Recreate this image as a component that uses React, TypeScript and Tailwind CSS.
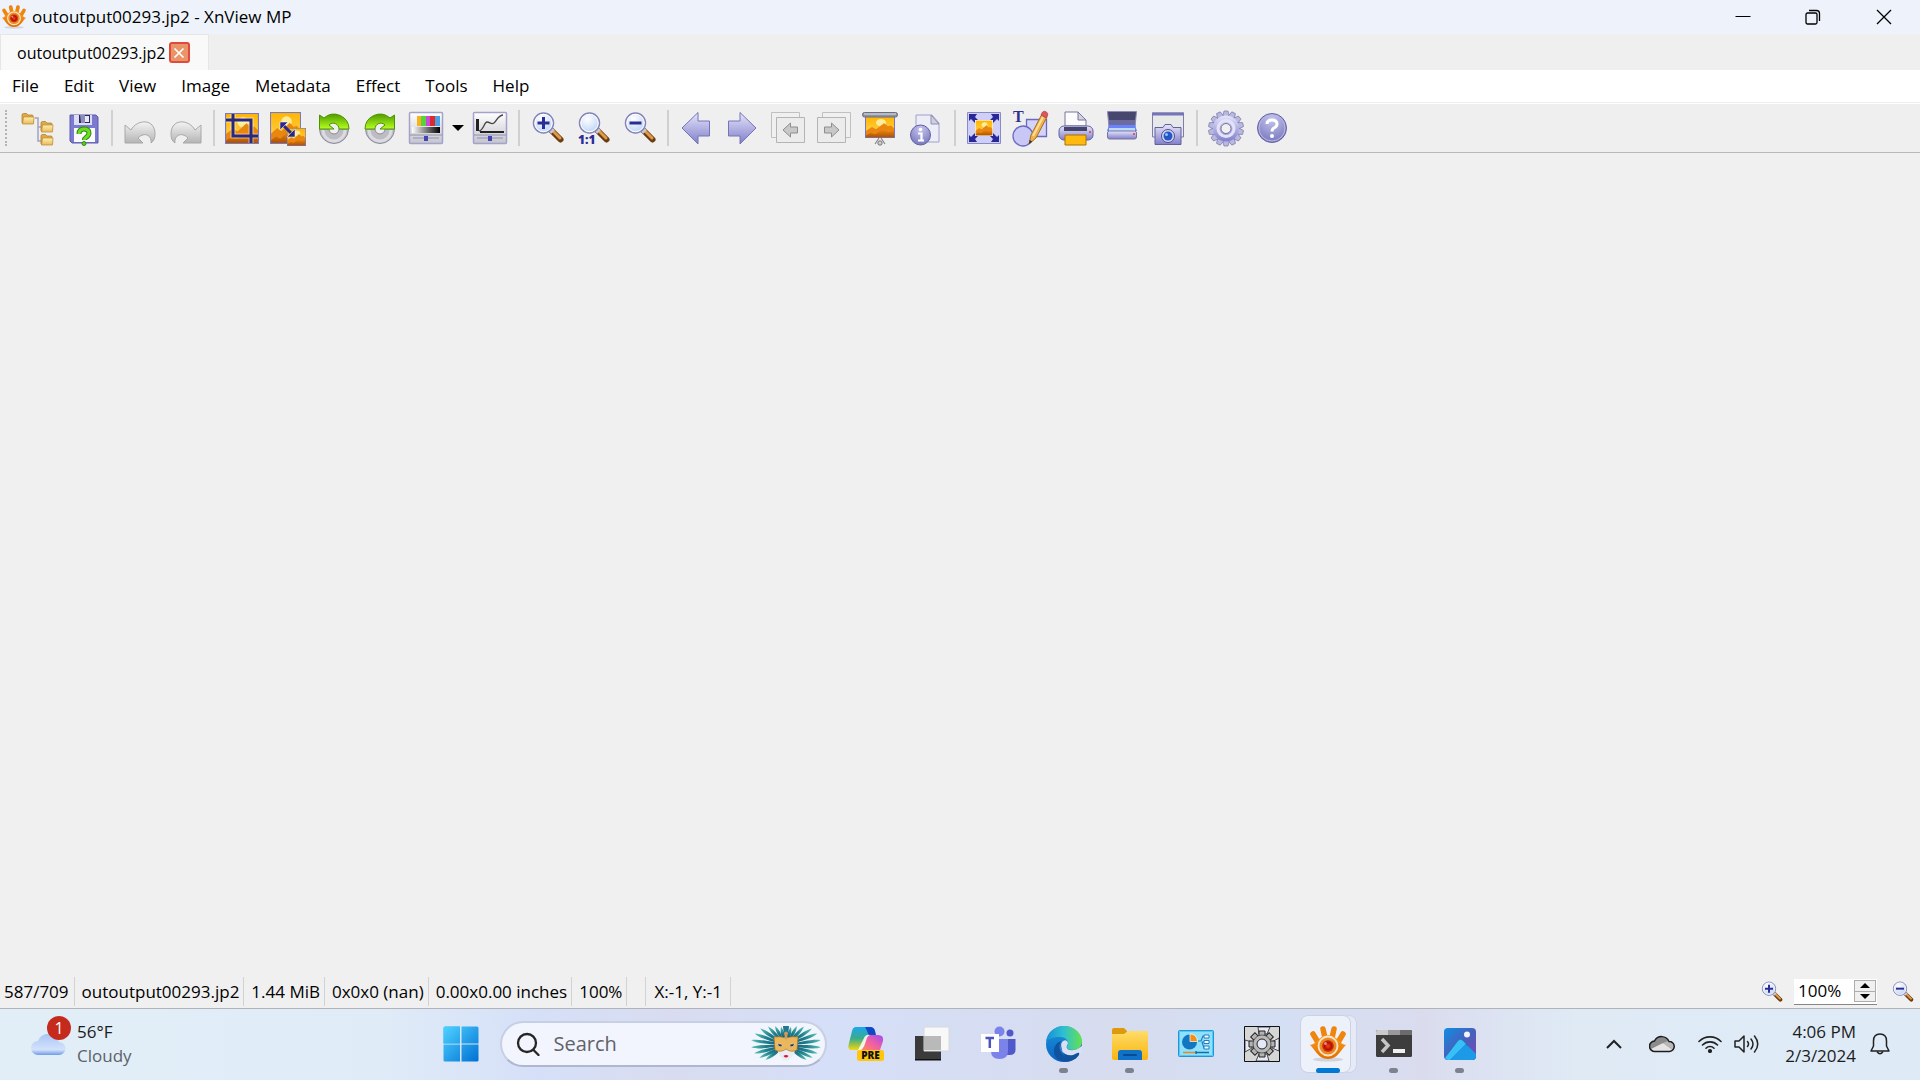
import React from 'react';
import clsx from 'clsx';

const menus = ['File', 'Edit', 'View', 'Image', 'Metadata', 'Effect', 'Tools', 'Help'];

const statusCells = [
  '587/709',
  'outoutput00293.jp2',
  '1.44 MiB',
  '0x0x0 (nan)',
  '0.00x0.00 inches',
  '100%',
];

type IconProps = { children: React.ReactNode; className?: string };

const Icon = ({ children, className = 'w-9 h-9' }: IconProps) => (
  <svg viewBox="0 0 36 36" className={clsx('block shrink-0 overflow-visible', className)} fill="none" aria-hidden="true">
    {children}
  </svg>
);

// Gradients shared by all the icons
const Gradients = () => (
  <svg className="absolute w-0 h-0" aria-hidden="true">
    <defs>
      <linearGradient id="folder" x1="0" y1="0" x2="0" y2="1">
        <stop offset="0" stopColor="#fff0b0" />
        <stop offset="1" stopColor="#e9b95a" />
      </linearGradient>
      <linearGradient id="violet" x1="0" y1="0" x2="0" y2="1">
        <stop offset="0" stopColor="#e6e5fb" />
        <stop offset="1" stopColor="#807fca" />
      </linearGradient>
      <linearGradient id="grey" x1="0" y1="0" x2="0" y2="1">
        <stop offset="0" stopColor="#f4f4f4" />
        <stop offset="1" stopColor="#b4b4b4" />
      </linearGradient>
      <linearGradient id="sky" x1="0" y1="0" x2="0" y2="1">
        <stop offset="0" stopColor="#ffb400" />
        <stop offset="1" stopColor="#ffd85e" />
      </linearGradient>
      <linearGradient id="dune" x1="0" y1="0" x2="0" y2="1">
        <stop offset="0" stopColor="#f08c10" />
        <stop offset="1" stopColor="#a84c00" />
      </linearGradient>
      <linearGradient id="green" x1="0" y1="0" x2="0" y2="1">
        <stop offset="0" stopColor="#4f9d00" />
        <stop offset="1" stopColor="#b8ff20" />
      </linearGradient>
      <linearGradient id="bw">
        <stop offset="0" stopColor="#fff" />
        <stop offset="1" stopColor="#000" />
      </linearGradient>
      <linearGradient id="panel" x1="0" y1="0" x2="0" y2="1">
        <stop offset="0" stopColor="#fff" />
        <stop offset="1" stopColor="#c4c4cc" />
      </linearGradient>
      <radialGradient id="lens" cx="0.4" cy="0.3" r="0.8">
        <stop offset="0" stopColor="#fff" />
        <stop offset="1" stopColor="#b4d0f2" />
      </radialGradient>
      <radialGradient id="disc" cx="0.5" cy="0.2" r="0.8">
        <stop offset="0" stopColor="#c5c4ee" />
        <stop offset="1" stopColor="#7978bd" />
      </radialGradient>
      <linearGradient id="win" x1="0" y1="0" x2="1" y2="1">
        <stop offset="0" stopColor="#4fd3ff" />
        <stop offset="1" stopColor="#0070d4" />
      </linearGradient>
      <linearGradient id="eye" x1="0" y1="0" x2="0" y2="1">
        <stop offset="0" stopColor="#ff9a1c" />
        <stop offset="1" stopColor="#e07000" />
      </linearGradient>
      <radialGradient id="iris">
        <stop offset="0" stopColor="#f24a20" />
        <stop offset="0.6" stopColor="#b80c00" />
        <stop offset="1" stopColor="#d84a10" />
      </radialGradient>
      <linearGradient id="cloud" x1="0" y1="0" x2="0" y2="1">
        <stop offset="0" stopColor="#a9c5f5" />
        <stop offset="0.75" stopColor="#d3e2fa" />
        <stop offset="1" stopColor="#6f9be8" />
      </linearGradient>
      <linearGradient id="copilotA" x1="0" y1="0" x2="0" y2="1">
        <stop offset="0" stopColor="#1aa7ee" />
        <stop offset="0.5" stopColor="#3bab8a" />
        <stop offset="1" stopColor="#f2d80c" />
      </linearGradient>
      <linearGradient id="copilotB" x1="1" y1="0" x2="0" y2="1">
        <stop offset="0" stopColor="#a04df0" />
        <stop offset="0.5" stopColor="#ee5fa6" />
        <stop offset="1" stopColor="#ff8a50" />
      </linearGradient>
      <linearGradient id="edgeTop">
        <stop offset="0" stopColor="#1790d4" />
        <stop offset="0.5" stopColor="#2fc0d0" />
        <stop offset="1" stopColor="#66e24c" />
      </linearGradient>
      <linearGradient id="edgeSide" x1="0" y1="0" x2="0" y2="1">
        <stop offset="0" stopColor="#1c96dc" />
        <stop offset="1" stopColor="#0a62c4" />
      </linearGradient>
      <linearGradient id="explorer" x1="0" y1="0" x2="0" y2="1">
        <stop offset="0" stopColor="#ffdc68" />
        <stop offset="1" stopColor="#f9b510" />
      </linearGradient>
      <linearGradient id="photo" x1="0" y1="0" x2="1" y2="1">
        <stop offset="0" stopColor="#0f8ee4" />
        <stop offset="0.5" stopColor="#4661bd" />
        <stop offset="1" stopColor="#7c45b0" />
      </linearGradient>
      <linearGradient id="feather" x1="0" y1="0" x2="1" y2="0">
        <stop offset="0" stopColor="#17506a" />
        <stop offset="0.55" stopColor="#1f7f8c" />
        <stop offset="1" stopColor="#5cc4b6" />
      </linearGradient>
    </defs>
  </svg>
);

const Landscape = ({ x, y, w, h, border = '#7a79c4' }: { x: number; y: number; w: number; h: number; border?: string }) => (
  <svg x={x} y={y} width={w} height={h} viewBox="0 0 30 30" preserveAspectRatio="none">
    <rect width="30" height="30" fill="url(#sky)" />
    <circle cx="16" cy="9" r="5" fill="#ffeb9c" />
    <path d="M0 21 7 15l4 3 8-8 4 4 3-1 4 5v12H0Z" fill="#e88610" />
    <path d="m0 27 6-4 4 2 8-7 5 4 7-3v11H0Z" fill="url(#dune)" />
    <rect x="0.5" y="0.5" width="29" height="29" stroke={border} strokeWidth="1" fill="none" />
  </svg>
);

const Folder = ({ x, y }: { x: number; y: number }) => (
  <g transform={`translate(${x} ${y})`}>
    <path d="M1 2q0-1.500 1.500-1.500h3L7 2h4q1 0 1 1v7H1Z" fill="#e2a943" stroke="#a87828" strokeWidth="0.700" />
    <path d="M2.500 4H13l-.5 7H1.500Z" fill="url(#folder)" stroke="#b9892f" strokeWidth="0.700" />
  </g>
);

const Magnifier = ({ children }: { children?: React.ReactNode }) => (
  <>
    <path d="m21 20 9.500 9.500" stroke="#6d3b12" strokeWidth="6" strokeLinecap="round" />
    <path d="m23 21 7 7" stroke="#dd9a48" strokeWidth="3" strokeLinecap="round" />
    <path d="m20 19 3 3" stroke="#c9c9d6" strokeWidth="5" />
    <circle cx="13.500" cy="13" r="10" fill="url(#lens)" stroke="#8583b8" strokeWidth="1.500" />
    <circle cx="13.500" cy="13" r="8.700" stroke="#fff" strokeWidth="1" />
    {children}
  </>
);

const icons: Record<string, React.ReactNode> = {
  Browser: (
    <>
      <path d="M15 8h3v23h4M18 17h4" stroke="#a3a3c4" strokeWidth="1.500" />
      <Folder x={1} y={3} />
      <Folder x={20} y={11} />
      <Folder x={20} y={24} />
    </>
  ),
  'Save as': (
    <>
      <path d="M4 5h26l2 2v26H6l-2-2Z" fill="#7b79d0" stroke="#5d5bab" />
      <path d="M8 5h18v10H8Z" fill="#dcdcf2" />
      <path d="M13 5h11v8H13Z" fill="#29295c" />
      <path d="M14 5h5v8h-4Z" fill="#8d8dc0" />
      <path d="M19 6h4v6h-4Z" fill="#e9e9f7" />
      <path d="M8 18h21v14H8Z" fill="#fafafe" />
      <path d="M13 24q0-5 5-5t5 4q0 2.500-3 4.500-1.500 1-1.500 2.500" stroke="#2e8a0a" strokeWidth="5" />
      <path d="M13 24q0-5 5-5t5 4q0 2.500-3 4.500-1.500 1-1.500 2.500" stroke="#6fdd22" strokeWidth="3" />
      <circle cx="18" cy="33.500" r="2" fill="#5ccc1a" stroke="#2e8a0a" />
    </>
  ),
  Undo: (
    <path d="M3 15l6 5C15 9 33 8 33 24c0 4-1 7-4 9 1-7-6-12-13-5l5 5H3Z" fill="url(#grey)" stroke="#a8a8a8" />
  ),
  Redo: (
    <path d="M33 15l-6 5C21 9 3 8 3 24c0 4 1 7 4 9-1-7 6-12 13-5l-5 5h18Z" fill="url(#grey)" stroke="#a8a8a8" />
  ),
  Crop: (
    <>
      <Landscape x={1} y={3} w={34} h={31} />
      <path d="M9 4v22h25M2 10h25v23" stroke="#fff" strokeOpacity="0.500" strokeWidth="5" />
      <path d="M9 4v22h25M2 10h25v23" stroke="#28287c" strokeWidth="3" />
    </>
  ),
  Resize: (
    <>
      <Landscape x={0} y={2} w={31} h={32} />
      <Landscape x={17} y={18} w={19} h={18} />
      <path d="m13 15 9 9" stroke="#28288c" strokeWidth="3" />
      <path d="M10 12h8l-8 8ZM25 27v-8l-8 8Z" fill="#28288c" stroke="#fff" strokeWidth="0.500" />
    </>
  ),
  'Rotate left': (
    <>
      <path d="M3.500 19H13a5 5 0 0 0 10 0h9.500a14.500 14.500 0 0 1-29 0Z" fill="#bcbcc2" stroke="#8b8ba0" />
      <path d="M7 20a11 11 0 0 0 22 0" stroke="#dcdce0" strokeWidth="3" />
      <path d="M33 19A15 15 0 0 0 8 8L3.500 5v14H18l-5-4c4-4 10-1 10 4Z" fill="url(#green)" stroke="#4b9400" />
    </>
  ),
  'Rotate right': (
    <>
      <path d="M3.500 19H13a5 5 0 0 0 10 0h9.500a14.500 14.500 0 0 1-29 0Z" fill="#bcbcc2" stroke="#8b8ba0" />
      <path d="M7 20a11 11 0 0 0 22 0" stroke="#dcdce0" strokeWidth="3" />
      <path d="M3 19A15 15 0 0 1 28 8l4.500-3v14H18l5-4c-4-4-10-1-10 4Z" fill="url(#green)" stroke="#4b9400" />
    </>
  ),
  Adjust: (
    <>
      <rect x="1.500" y="2.500" width="33" height="31" rx="1" fill="url(#panel)" stroke="#a3a2cc" strokeWidth="1.500" />
      <path d="M9 6h5v10H9z" fill="#f8b31c" />
      <path d="M13 6h5v10h-5z" fill="#57d43a" />
      <path d="M18 6h5v10h-5z" fill="#c94ad6" />
      <path d="M22 6h5v10h-5z" fill="#de2a2c" />
      <path d="M27 6h5v10h-5z" fill="#4aa0e4" />
      <path d="M4 17h28v6H4z" fill="url(#bw)" />
      <path d="M2 25h32M5 28h26" stroke="#9090b4" />
      <path d="M16 26h4v5h-4z" fill="#4444b0" />
    </>
  ),
  Curves: (
    <>
      <rect x="1.500" y="2.500" width="33" height="31" rx="1" fill="url(#panel)" stroke="#a3a2cc" strokeWidth="1.500" />
      <path d="M4 9h3v12H4z" fill="#222" />
      <path d="M8 21h24v2H8z" fill="#222" />
      <path d="M7 21c5-1 5-9 8-9s4 3 7 1 3-7 9-8" stroke="#444" strokeWidth="1.300" />
      <path d="M2 25h32M5 28h26" stroke="#9090b4" />
      <path d="M16 26h4v5h-4z" fill="#4444b0" />
    </>
  ),
  'Zoom in': (
    <Magnifier>
      <path d="M13.500 7v12m-6-6h12" stroke="#2c2c96" strokeWidth="3" />
    </Magnifier>
  ),
  'Zoom 1:1': (
    <>
      <Magnifier />
      <text x="2" y="34" fontSize="12" fontWeight="800" fontFamily="Open Sans, sans-serif" fill="#2c2c96">1:1</text>
    </>
  ),
  'Zoom out': (
    <Magnifier>
      <path d="M7.500 13h12" stroke="#2c2c96" strokeWidth="3" />
    </Magnifier>
  ),
  Previous: <path d="M4 18 20 2.500V11h11.500v15H20v8Z" fill="url(#violet)" stroke="#7574b8" />,
  Next: <path d="M32 18 16 2.500V11H4.500v15H16v8Z" fill="url(#violet)" stroke="#7574b8" />,
  'Previous page': (
    <>
      <path d="M1.500 2.500h28v25h-28z" fill="#f0f0f0" stroke="#c0c0c0" />
      <path d="M6.500 7.500h28v25h-28z" fill="#ececec" stroke="#b4b4b4" />
      <path d="m13 20 7.500-7v4h7v6h-7v4Z" fill="#c8c8c8" stroke="#8e8e8e" />
    </>
  ),
  'Next page': (
    <>
      <path d="M6.500 2.500h28v25h-28z" fill="#f0f0f0" stroke="#c0c0c0" />
      <path d="M1.500 7.500h28v25h-28z" fill="#ececec" stroke="#b4b4b4" />
      <path d="m23 20-7.500-7v4h-7v6h7v4Z" fill="#c8c8c8" stroke="#8e8e8e" />
    </>
  ),
  Slideshow: (
    <>
      <path d="m17 28-4 6m6-6 4 6" stroke="#888" strokeWidth="1.200" />
      <circle cx="18" cy="33" r="2.200" fill="#ccc" stroke="#777" />
      <Landscape x={3} y={6} w={30} h={22} border="#7776b8" />
      <rect x="0.500" y="2.500" width="35" height="4.500" rx="2" fill="#8f93a3" stroke="#6a6d7d" />
      <path d="M2 4h32" stroke="#dfe2ea" />
    </>
  ),
  Information: (
    <>
      <path d="M8 5h16l7 8v19H8Z" fill="#ededf8" stroke="#a09fd0" />
      <path d="M23 5v9h8Z" fill="#cfcfe0" stroke="#8f8fb0" />
      <circle cx="12.500" cy="25" r="10" fill="url(#disc)" stroke="#6160a4" />
      <circle cx="12.500" cy="19.500" r="1.800" fill="#fff" />
      <path d="M10 23.500h3.500V30M10 30.500h6" stroke="#fff" strokeWidth="2.200" />
    </>
  ),
  Fullscreen: (
    <>
      <path d="M1.500 2.500h33v31h-33z" fill="#cfd0fa" stroke="#8b8bc4" />
      <path d="M3 4h8L9 7l3 3-3 3-4-4-2 2ZM33 4h-8l2 3-3 3 3 3 4-4 2 2ZM3 32h8l-2-3 3-3-3-3-4 4-2-2ZM33 32h-8l2-3-3-3 3-3 4 4 2-2Z" fill="#28289c" />
      <Landscape x={9} y={10} w={18} h={16} border="#fff" />
    </>
  ),
  Draw: (
    <>
      <path d="M14.500 9.500h20v17h-20z" fill="#d4d3f8" stroke="#6b6ac0" strokeWidth="1.300" />
      <circle cx="11" cy="26" r="10" fill="#c8c7f6" stroke="#6b6ac0" strokeWidth="1.300" />
      <text x="1" y="12" fontSize="16" fontWeight="700" fontFamily="Liberation Serif, serif" fill="#30308c">T</text>
      <path d="m17 34 2-9L30 4l5 3-11 21Z" fill="#f0b14a" stroke="#a0702a" />
      <path d="m21 26 10-19" stroke="#ffdf98" strokeWidth="2" />
      <path d="m29 5 1.500-3q2-1.500 4 0t1 4L34 8Z" fill="#e0565c" stroke="#9c3538" strokeWidth="0.600" />
      <path d="m17 34 .7-4 2.500 1.600Z" fill="#333" />
    </>
  ),
  Print: (
    <>
      <path d="M7 16V2h13l8 8v6Z" fill="#fcfcff" stroke="#77779c" />
      <path d="M20 2v8h8Z" fill="#d3d3df" stroke="#77779c" />
      <rect x="1" y="16" width="34" height="14" rx="5" fill="url(#violet)" stroke="#62629c" />
      <path d="M6 17h23v4H6Z" fill="#44446c" />
      <circle cx="32" cy="22" r="1" fill="#e33" />
      <path d="M7 25h21v10H7Z" fill="#ffb90f" stroke="#a97400" />
    </>
  ),
  Scan: (
    <>
      <path d="M3.500 1.500h29L31 17H5Z" fill="#46466e" stroke="#8c8cb0" />
      <path d="M5 10h26v6H5Z" fill="#6b6ba0" />
      <path d="M5 15h26l2 6H3Z" fill="#6a82fa" />
      <path d="M5 18h26v3H5Z" fill="#bcd8ff" />
      <rect x="3.500" y="21" width="29" height="8" rx="2" fill="url(#violet)" stroke="#74749c" />
      <circle cx="30" cy="24" r="1" fill="#e33" />
    </>
  ),
  Capture: (
    <>
      <path d="M2.500 3h31v24h-31z" fill="#e6e9e8" stroke="#7e7db0" />
      <path d="M2 2.500h32v3H2z" fill="#7574b6" />
      <path d="M5 17.500h8l2-3h6l2 3h8v17H5Z" fill="url(#violet)" stroke="#62619c" />
      <circle cx="18" cy="26" r="6.500" fill="#d6d6f0" stroke="#50508c" />
      <circle cx="18" cy="26" r="4.500" fill="#2356c8" />
      <circle cx="16.500" cy="24.500" r="1.500" fill="#8fc0ff" />
    </>
  ),
  Settings: (
    <>
      {Array.from({ length: 14 }, (_, i) => (
        <path
          key={i}
          d="M16 1h4l1.500 6h-7Z"
          fill="#b9b8e2"
          stroke="#7a79a8"
          strokeWidth="0.700"
          transform={`rotate(${(i * 360) / 14} 18 18.500)`}
        />
      ))}
      <circle cx="18" cy="18.500" r="13" fill="url(#violet)" />
      <circle cx="18" cy="18.500" r="8" stroke="#e3e2fa" strokeWidth="3" />
      <circle cx="18" cy="18.500" r="5" fill="#f0f0f0" stroke="#77769f" />
    </>
  ),
  Help: (
    <>
      <circle cx="18" cy="18" r="14.500" fill="url(#disc)" stroke="#6362a4" />
      <circle cx="18" cy="18" r="13" stroke="#bab9e4" />
      <path d="M13 14q0-4 5-4t5 4q0 2.500-3 4-2 1-2 3.500" stroke="#fff" strokeWidth="3" />
      <circle cx="18" cy="26" r="2" fill="#fff" />
    </>
  ),
};

const ToolButton = ({ name }: { name: string }) => (
  <button type="button" aria-label={name} className="w-[46px] flex justify-center">
    <Icon>{icons[name]}</Icon>
  </button>
);

const Separator = ({ wide = false }: { wide?: boolean }) => (
  <div className={clsx('w-[2px] h-9 bg-[#d0d0d0] shrink-0', wide ? 'mx-[5px]' : 'mx-1')} />
);

const XnViewIcon = () => (
  <>
    <ellipse cx="18" cy="33.500" rx="15" ry="2" fill="#000" fillOpacity="0.120" />
    <path d="m3 8 6 10M13 3l2 9M24 3l-2 9M33 8l-6 10" stroke="#ee850f" strokeWidth="5.500" strokeLinecap="round" />
    <path d="M0 19c6 0 9-10 18-10s12 10 18 10c-5 4-8 14-18 14S5 23 0 19Z" fill="url(#eye)" />
    <circle cx="18" cy="20" r="9.500" fill="#e98a26" stroke="#fbe6c8" strokeWidth="1.800" />
    <circle cx="18" cy="20" r="6" fill="url(#iris)" />
    <circle cx="15.500" cy="17.500" r="1.500" fill="#fff" fillOpacity="0.500" />
  </>
);

// angle above the horizon and length of each feather on one side of the mask
const feathers = [
  [-40, 26],
  [-29, 30],
  [-18, 33],
  [-7, 35],
  [5, 35],
  [17, 33],
  [29, 30],
  [42, 25],
  [56, 21],
  [71, 18],
];

const Mask = () => (
  <svg viewBox="0 0 70 40" className="w-[70px] h-10 block" aria-hidden="true">
    {feathers.map(([angle, len]) => {
      const d = `M4 0C${len / 2} -1 ${len - 8} -3 ${len} -1C${len - 5} 2 ${len / 2} 2 4 1Z`;
      return (
        <g key={angle} fill="url(#feather)">
          <path d={d} transform={`translate(35 20) rotate(${-angle})`} />
          <path d={d} transform={`translate(35 20) scale(-1 1) rotate(${-angle})`} />
        </g>
      );
    })}
    <path d="M32 2h6l-1 11h-4Z" fill="#23798c" />
    <path d="M26 22q0 7 4 12 5 5 10 0t4-12Z" fill="#e9ecf2" />
    <path d="M23 13q6-1 12 1 6-2 12-1l-1 13q-6 3-11-1-5 4-11 1Z" fill="#ecb65a" stroke="#a97325" strokeWidth="0.700" />
    <path d="M33 9q2-3 4 0l-2 8Z" fill="#cf9a5a" />
    <path d="M26 20q4-1 6 2-4 2-6-2Zm18 0q-4-1-6 2 4 2 6-2Z" fill="#222c3a" stroke="#fff" strokeWidth="0.500" />
    <path d="M32.500 32q2.500-2 5 0-2.500 3-5 0Z" fill="#d9142c" />
  </svg>
);

const taskbarApps: { name: string; running?: boolean; active?: boolean; icon: React.ReactNode }[] = [
  {
    name: 'Copilot',
    icon: (
      <>
        <path d="M8 1h14q4 0 5 4l1 4h-8L13 24H3Q-1 24 1 17L4 5q1-4 4-4Z" fill="url(#copilotA)" />
        <path d="M17 1h5q4 0 5 4l1 5h-7Q18 2 17 1Z" fill="#1347c8" />
        <path d="M21 9h9q6 0 5 6l-3 9H13c4-1 4-15 8-15Z" fill="url(#copilotB)" />
        <path d="M16 12q2-4 6-3-3 1-4 6t-5 9h-3Z" fill="#fff" fillOpacity="0.850" />
        <rect x="9" y="24" width="27" height="11" rx="2.500" fill="#ffc60b" />
        <text x="22.500" y="33" textAnchor="middle" fontSize="10" fontWeight="800" fontFamily="Open Sans, sans-serif" fill="#111">PRE</text>
      </>
    ),
  },
  {
    name: 'Task view',
    icon: (
      <>
        <path d="M1 10h26v24H1z" fill="#3a3a3a" />
        <path d="M1 33h26v1.500H1z" fill="#111" />
        <path d="M10 1h25v24H10z" fill="#f8f8f8" stroke="#d8d8dc" />
        <path d="M10 10h17v14H10z" fill="#b9b9b9" />
      </>
    ),
  },
  {
    name: 'Microsoft Teams',
    icon: (
      <>
        <circle cx="30" cy="7" r="3.500" fill="#5059c9" />
        <path d="M24 13h11.500v11q0 5-6 5H24Z" fill="#5059c9" />
        <circle cx="19.500" cy="5.500" r="5" fill="#7b83eb" />
        <path d="M11 13h17v12q0 8-8.500 8T11 25Z" fill="#7b83eb" />
        <path d="M1 8h18v18H1z" fill="#fff" />
        <path d="M5.500 12h8.500M9.800 12v10" stroke="#4b53bc" strokeWidth="2.500" />
      </>
    ),
  },
  {
    name: 'Microsoft Edge',
    running: true,
    icon: (
      <>
        <circle cx="18" cy="18" r="18" fill="url(#edgeSide)" />
        <path d="M0 16C1 6 9 0 18 0c11 0 18 8 18 15 0 6-4 9-9 9-4 0-6-1-6-3 0-1 1-2 1-4 0-3-3-6-8-6C7 11 2 13 0 16Z" fill="url(#edgeTop)" />
        <path d="M15 15c-5 8 2 17 10 17 3 0 5-1 6-1-4 5-12 6-18 3-7-4-7-16 2-19Z" fill="#11529e" />
        <path d="M22 17c-1 3-2 4-1 5 1 3 8 3 12 0l3-2v8l-3 0c-3 2-8 3-12 1-6-2-9-9-4-14q4-2 5 2Z" fill="#d9e0f3" />
        <path d="M15 16c-3 8 4 15 12 13 3-1 5-3 6-2s-1 4-4 6c-6 2-14-2-14-17Z" fill="#11529e" />
      </>
    ),
  },
  {
    name: 'File Explorer',
    running: true,
    icon: (
      <>
        <path d="M0 4q0-2 2-2h10l3 3v4H0Z" fill="#dc9a0c" />
        <path d="M0 8h12l4-3h20v27q0 2-2 2H2q-2 0-2-2Z" fill="url(#explorer)" />
        <path d="M6 34v-7q0-3 3-3h18q3 0 3 3v7Z" fill="#0f72c8" />
        <path d="M12 29h12" stroke="#0a4c90" strokeWidth="2" strokeLinecap="round" />
      </>
    ),
  },
  {
    name: 'Control Panel',
    icon: (
      <>
        <rect x="0.500" y="4.500" width="35" height="26" rx="1" fill="#55c8f5" stroke="#1f97d4" />
        <path d="M2 6h32v23H2z" fill="#8fe0fb" />
        <circle cx="11.500" cy="16" r="7.500" fill="#1276c0" />
        <path d="M12 15.500V8q7 0 7.500 7.500Z" fill="#f48c18" stroke="#fff" strokeWidth="0.700" />
        <path d="M20 15h3l2-5h2M24 16h3M24 16l2 6h2" stroke="#1c7fc0" strokeWidth="1.200" />
        <path d="M26 9h5v3h-5zM26 14.500h5v3h-5zM26 20h5v3h-5z" fill="#fff" stroke="#1c7fc0" />
        <path d="M5 26.500h12" stroke="#e88920" strokeWidth="1.500" />
        <path d="M18 26.500h13M18 25v3" stroke="#146cac" strokeWidth="1.500" />
      </>
    ),
  },
  {
    name: 'Batch tool',
    icon: (
      <>
        <path d="M.5.500h35v35H.500z" fill="#d6d6d6" stroke="#111" />
        <path d="M14 1h12l-3 7h-8ZM1 14l7 2v6l-7 4ZM35 12l-7 4v6l7 3ZM12 35l3-7h8l2 7Z" fill="#e6eaf6" stroke="#222" strokeWidth="0.800" />
        {Array.from({ length: 8 }, (_, i) => (
          <path key={i} d="M15 5h6v6h-6Z" fill="#b4b4b4" stroke="#222" transform={`rotate(${i * 45} 18 18)`} />
        ))}
        <circle cx="18" cy="18" r="9" fill="#b9b9b9" stroke="#333" strokeWidth="0.700" />
        <circle cx="18" cy="18" r="5" fill="#e4e9f8" stroke="#222" />
      </>
    ),
  },
  { name: 'XnView MP', active: true, icon: <XnViewIcon /> },
  {
    name: 'Terminal',
    running: true,
    icon: (
      <>
        <rect y="4" width="36" height="27" rx="1.500" fill="#3d3d3d" />
        <path d="M0 9V5.500Q0 4 1.500 4H12v5Z" fill="#c9c9c9" />
        <path d="M12 4h12v5H12z" fill="#999" />
        <path d="M24 4h10.500Q36 4 36 5.500V9H24Z" fill="#6c6c6c" />
        <path d="m6 13 6 6.500L6 26" stroke="#c4c4c4" strokeWidth="3.500" />
        <path d="M17 23h12v4H17z" fill="#f0f0f0" />
      </>
    ),
  },
  {
    name: 'Photos',
    running: true,
    icon: (
      <>
        <rect x="2" y="2" width="32" height="32" rx="4" fill="url(#photo)" />
        <path d="M3 32 16 15q2.500-3 5 0l13 13v2q0 4-4 4H6q-2 0-3-2Z" fill="#1272cc" />
        <path d="M3 32 16 15q2.500-3 5 0l3 3L8 34H6q-2 0-3-2Z" fill="#36c0f5" />
        <path d="m8 34 14-14q2-2 4 0l8 8v2q0 4-4 4Z" fill="#1c9ae8" />
        <circle cx="25" cy="8.500" r="3" fill="#f3f3fb" />
      </>
    ),
  },
];

const TitleBar = () => (
  <header className="h-[34px] bg-[#eef3fb] flex items-center shrink-0">
    <Icon className="w-6 h-6 ml-[2px]">
      <XnViewIcon />
    </Icon>
    <h1 className="ml-[6px] flex-1 font-normal">outoutput00293.jp2 - XnView MP</h1>
    <div className="flex h-full text-black">
      <button type="button" aria-label="Minimize" className="w-[70px] flex items-center justify-center">
        <svg viewBox="0 0 16 16" className="w-4 h-4" stroke="currentColor"><path d="M.5 7.500h15" /></svg>
      </button>
      <button type="button" aria-label="Restore" className="w-[70px] flex items-center justify-center">
        <svg viewBox="0 0 16 16" className="w-4 h-4" stroke="currentColor" strokeWidth="1.300" fill="none">
          <rect x="1" y="4" width="11" height="11" rx="1.500" />
          <path d="M4 1.500h7.500q3 0 3 3V12" />
        </svg>
      </button>
      <button type="button" aria-label="Close" className="w-[72px] flex items-center justify-center">
        <svg viewBox="0 0 16 16" className="w-4 h-4" stroke="currentColor" strokeWidth="1.300"><path d="m1 1 14 14M15 1 1 15" /></svg>
      </button>
    </div>
  </header>
);

const TabBar = () => (
  <div className="h-9 bg-[#efefef] shrink-0 flex">
    <div className="w-[209px] bg-[#f9f9f9] border border-b-0 border-[#e6e6e6] flex items-center pl-4">
      <span className="text-base">outoutput00293.jp2</span>
      <button
        type="button"
        aria-label="Close tab"
        className="ml-[3px] w-[21px] h-[21px] bg-[#ea9469] border-2 border-[#e04a3c] rounded-[3px] flex items-center justify-center"
      >
        <svg viewBox="0 0 12 12" className="w-3 h-3" stroke="#fff" strokeWidth="1.600"><path d="m1.500 1.500 9 9M10.500 1.500l-9 9" /></svg>
      </button>
    </div>
  </div>
);

const Toolbar = () => (
  <div role="toolbar" className="h-[49px] border-b border-[#b8b8b8] bg-[#efefef] flex items-center shrink-0">
    <div className="ml-1 mr-2 w-[3px] h-9 border-r-2 border-dotted border-[#b4b4b4]" />
    <ToolButton name="Browser" />
    <ToolButton name="Save as" />
    <Separator />
    <ToolButton name="Undo" />
    <ToolButton name="Redo" />
    <Separator />
    <ToolButton name="Crop" />
    <ToolButton name="Resize" />
    <ToolButton name="Rotate left" />
    <ToolButton name="Rotate right" />
    <ToolButton name="Adjust" />
    <button type="button" aria-label="More adjustments" className="w-[18px] flex justify-center">
      <svg viewBox="0 0 12 6" className="w-3 h-[6px]"><path d="M0 0h12L6 6Z" /></svg>
    </button>
    <ToolButton name="Curves" />
    <Separator wide />
    <ToolButton name="Zoom in" />
    <ToolButton name="Zoom 1:1" />
    <ToolButton name="Zoom out" />
    <Separator />
    <ToolButton name="Previous" />
    <ToolButton name="Next" />
    <ToolButton name="Previous page" />
    <ToolButton name="Next page" />
    <ToolButton name="Slideshow" />
    <ToolButton name="Information" />
    <Separator wide />
    <ToolButton name="Fullscreen" />
    <ToolButton name="Draw" />
    <ToolButton name="Print" />
    <ToolButton name="Scan" />
    <ToolButton name="Capture" />
    <Separator wide />
    <ToolButton name="Settings" />
    <ToolButton name="Help" />
  </div>
);

const StatusBar = () => (
  <footer className="h-[34px] bg-[#f0f0f0] border-b border-[#b0b4b8] flex items-center shrink-0">
    {statusCells.map((cell, i) => (
      <div key={cell} className={clsx('h-[29px] flex items-center border-r border-[#d2d2d2]', i === 0 ? 'pl-1 pr-[5px]' : 'pl-[7px] pr-1')}>
        {cell}
      </div>
    ))}
    <div className="w-[19px] h-[29px] border-r border-[#d2d2d2]" />
    <div className="h-[29px] flex items-center px-2 border-r border-[#d2d2d2]">X:-1, Y:-1</div>
    <div className="ml-auto flex items-center pr-[5px]">
      <button type="button" aria-label="Zoom in">
        <Icon className="w-6 h-6">{icons['Zoom in']}</Icon>
      </button>
      <div className="ml-[10px] mr-[14px] h-[26px] w-[83px] bg-white border-b border-[#868686] flex items-center">
        <input aria-label="Zoom level" defaultValue="100%" className="w-[60px] pl-1 bg-transparent outline-none" />
        <div className="w-[22px] h-[22px] border border-[#adadad] bg-[#f0f0f0] flex flex-col divide-y divide-[#adadad]">
          <button type="button" aria-label="Increase" className="flex-1 flex items-center justify-center">
            <svg viewBox="0 0 10 5" className="w-[10px] h-[5px]"><path d="M0 5h10L5 0Z" /></svg>
          </button>
          <button type="button" aria-label="Decrease" className="flex-1 flex items-center justify-center">
            <svg viewBox="0 0 10 5" className="w-[10px] h-[5px]"><path d="M0 0h10L5 5Z" /></svg>
          </button>
        </div>
      </div>
      <button type="button" aria-label="Zoom out">
        <Icon className="w-6 h-6">{icons['Zoom out']}</Icon>
      </button>
    </div>
  </footer>
);

const Taskbar = () => (
  <nav className="h-[71px] pb-[2px] shrink-0 flex items-center text-[#1c1c1c] bg-[linear-gradient(90deg,#e2eef7_0%,#dfebf7_20%,#d5e0f8_28%,#d9dcf0_35%,#d5dff7_43%,#d7dcef_58%,#d4dff3_66%,#dadcee_74%,#dfeaf5_82%,#deebf7_100%)]">
    <div className="flex-1 px-[30px]">
      <button type="button" className="flex items-center text-left">
        <span className="relative block w-9 mr-[11px]">
          <svg viewBox="0 0 36 24" className="w-9 h-6 block" aria-hidden="true">
            <path d="M8 23a7 7 0 0 1 0-14 11 11 0 0 1 21 1 6.500 6.500 0 0 1 0 13Z" fill="url(#cloud)" />
          </svg>
          <span className="absolute -top-4 left-[17px] w-6 h-6 rounded-full bg-[#c42b1c] text-white text-base leading-6 text-center">1</span>
        </span>
        <span className="leading-6">
          56°F
          <br />
          <span className="text-[#5c6168]">Cloudy</span>
        </span>
      </button>
    </div>

    <div className="flex items-center">
      <button type="button" aria-label="Start" className="w-[66px] flex justify-center">
        <Icon>
          <path d="M.5 2q0-1.500 1.500-1.500h15v17H.500Z" fill="#3cbcf5" />
          <path d="M.5 2q0-1.500 1.500-1.500h15v17H.500ZM18.500.500H34q1.500 0 1.500 1.500v15.500h-17ZM.5 18.500h16.500v17H2q-1.500 0-1.500-1.500ZM18.500 18.500h17V34q0 1.500-1.500 1.500H18.500Z" fill="url(#win)" />
        </Icon>
      </button>
      <label className="ml-[6px] mr-[6px] w-[327px] h-[46px] rounded-full bg-[#f2f5fd] border-2 border-[#c6cfe4] border-b-[#adb8ce] flex items-center pl-[14px] pr-1">
        <svg viewBox="0 0 24 24" className="w-6 h-6 shrink-0" fill="none" stroke="#252525" strokeWidth="2.300" strokeLinecap="round" aria-hidden="true">
          <circle cx="11" cy="11" r="9" />
          <path d="m17.500 18 5 5" />
        </svg>
        <input
          type="text"
          placeholder="Search"
          aria-label="Search"
          className="ml-[14px] flex-1 min-w-0 bg-transparent outline-none text-xl placeholder:text-[#5f6268]"
        />
        <Mask />
      </label>
      {taskbarApps.map(({ name, icon, running, active }) => (
        <button
          key={name}
          type="button"
          aria-label={name}
          className="relative w-[66px] h-[58px] flex items-center justify-center"
        >
          {active && (
            <>
              <span className="absolute right-1 top-0 w-4 h-full rounded-lg bg-[#e6eaf6] border border-[#cdd4e6]" />
              <span className="absolute left-[5px] top-0 w-[51px] h-full rounded-lg bg-[#edf1fa] border border-[#cbd2e6]" />
              <span className="absolute bottom-0 left-[21px] w-6 h-[5px] rounded-full bg-[#0078d4]" />
            </>
          )}
          <Icon className="relative w-9 h-9">{icon}</Icon>
          {running && <span className="absolute bottom-0 left-7 w-[9px] h-[5px] rounded-full bg-[#7d828e]" />}
        </button>
      ))}
    </div>

    <div className="flex-1 flex items-center justify-end px-[30px]">
      <button type="button" aria-label="Show hidden icons">
        <svg viewBox="0 0 16 10" className="w-4 h-[10px]" fill="none" stroke="#222" strokeWidth="2"><path d="m1 9 7-7 7 7" /></svg>
      </button>
      <button type="button" aria-label="OneDrive" className="ml-[27px]">
        <svg viewBox="0 0 26 18" className="w-[26px] h-[18px]">
          <path d="M6 16.500a5 5 0 0 1-.5-10.500A8 8 0 0 1 20 6.500a5 5 0 0 1 .5 10Z" fill="#8b8b8b" />
          <path d="M2 14 14 8l10 7q-2 2-4 1.500H6Q3 16 2 14Z" fill="#e4e4e4" />
          <path d="m14 8 5-2q6 1 6 6l-1 3Z" fill="#b8b8b8" />
          <path d="M6 16.500a5 5 0 0 1-.5-10.500A8 8 0 0 1 20 6.500a5 5 0 0 1 .5 10Z" fill="none" stroke="#1c1c1c" strokeWidth="1.500" />
        </svg>
      </button>
      <button type="button" aria-label="Network" className="ml-[23px]">
        <svg viewBox="0 0 24 18" className="w-6 h-[18px]" fill="none" stroke="#222" strokeWidth="1.600" strokeLinecap="round">
          <path d="M1 6.500a15.500 15.500 0 0 1 22 0M4.500 10a10.500 10.500 0 0 1 15 0M8 13.200a5.600 5.600 0 0 1 8 0" />
          <circle cx="12" cy="16" r="1.300" fill="#222" />
        </svg>
      </button>
      <button type="button" aria-label="Volume" className="ml-3">
        <svg viewBox="0 0 25 20" className="w-[25px] h-5" fill="none" stroke="#222" strokeWidth="1.500" strokeLinecap="round" strokeLinejoin="round">
          <path d="M1 7h4l5-5v16l-5-5H1Z" />
          <path d="M13.500 7.500q2 2.500 0 5M17 5q4 5 0 10M20.500 2q6.500 8 0 16" />
        </svg>
      </button>
      <button type="button" className="ml-[26px] text-right leading-6">
        4:06 PM
        <br />
        2/3/2024
      </button>
      <button type="button" aria-label="Notifications" className="ml-[14px]">
        <svg viewBox="0 0 20 22" className="w-5 h-[22px]" fill="none" stroke="#222" strokeWidth="1.500" strokeLinejoin="round">
          <path d="M10 1q-6.500 0-6.500 7v5L1 18h18l-2.500-5V8q0-7-6.500-7Z" />
          <path d="M7 18.500q3 4.500 6 0" />
        </svg>
      </button>
    </div>
  </nav>
);

export default function App() {
  return (
    <div className="min-h-screen flex flex-col bg-[#f0f0f0] text-black text-[17px] leading-6 font-['Open_Sans',sans-serif]">
      <Gradients />
      <TitleBar />
      <TabBar />
      <nav className="h-8 bg-white flex gap-px shrink-0">
        {menus.map((menu) => (
          <button key={menu} type="button" className="px-3">
            {menu}
          </button>
        ))}
      </nav>
      <div className="h-[2px] shrink-0 border-t border-[#efefef] bg-white" />
      <Toolbar />
      <main className="flex-1" />
      <StatusBar />
      <Taskbar />
    </div>
  );
}
